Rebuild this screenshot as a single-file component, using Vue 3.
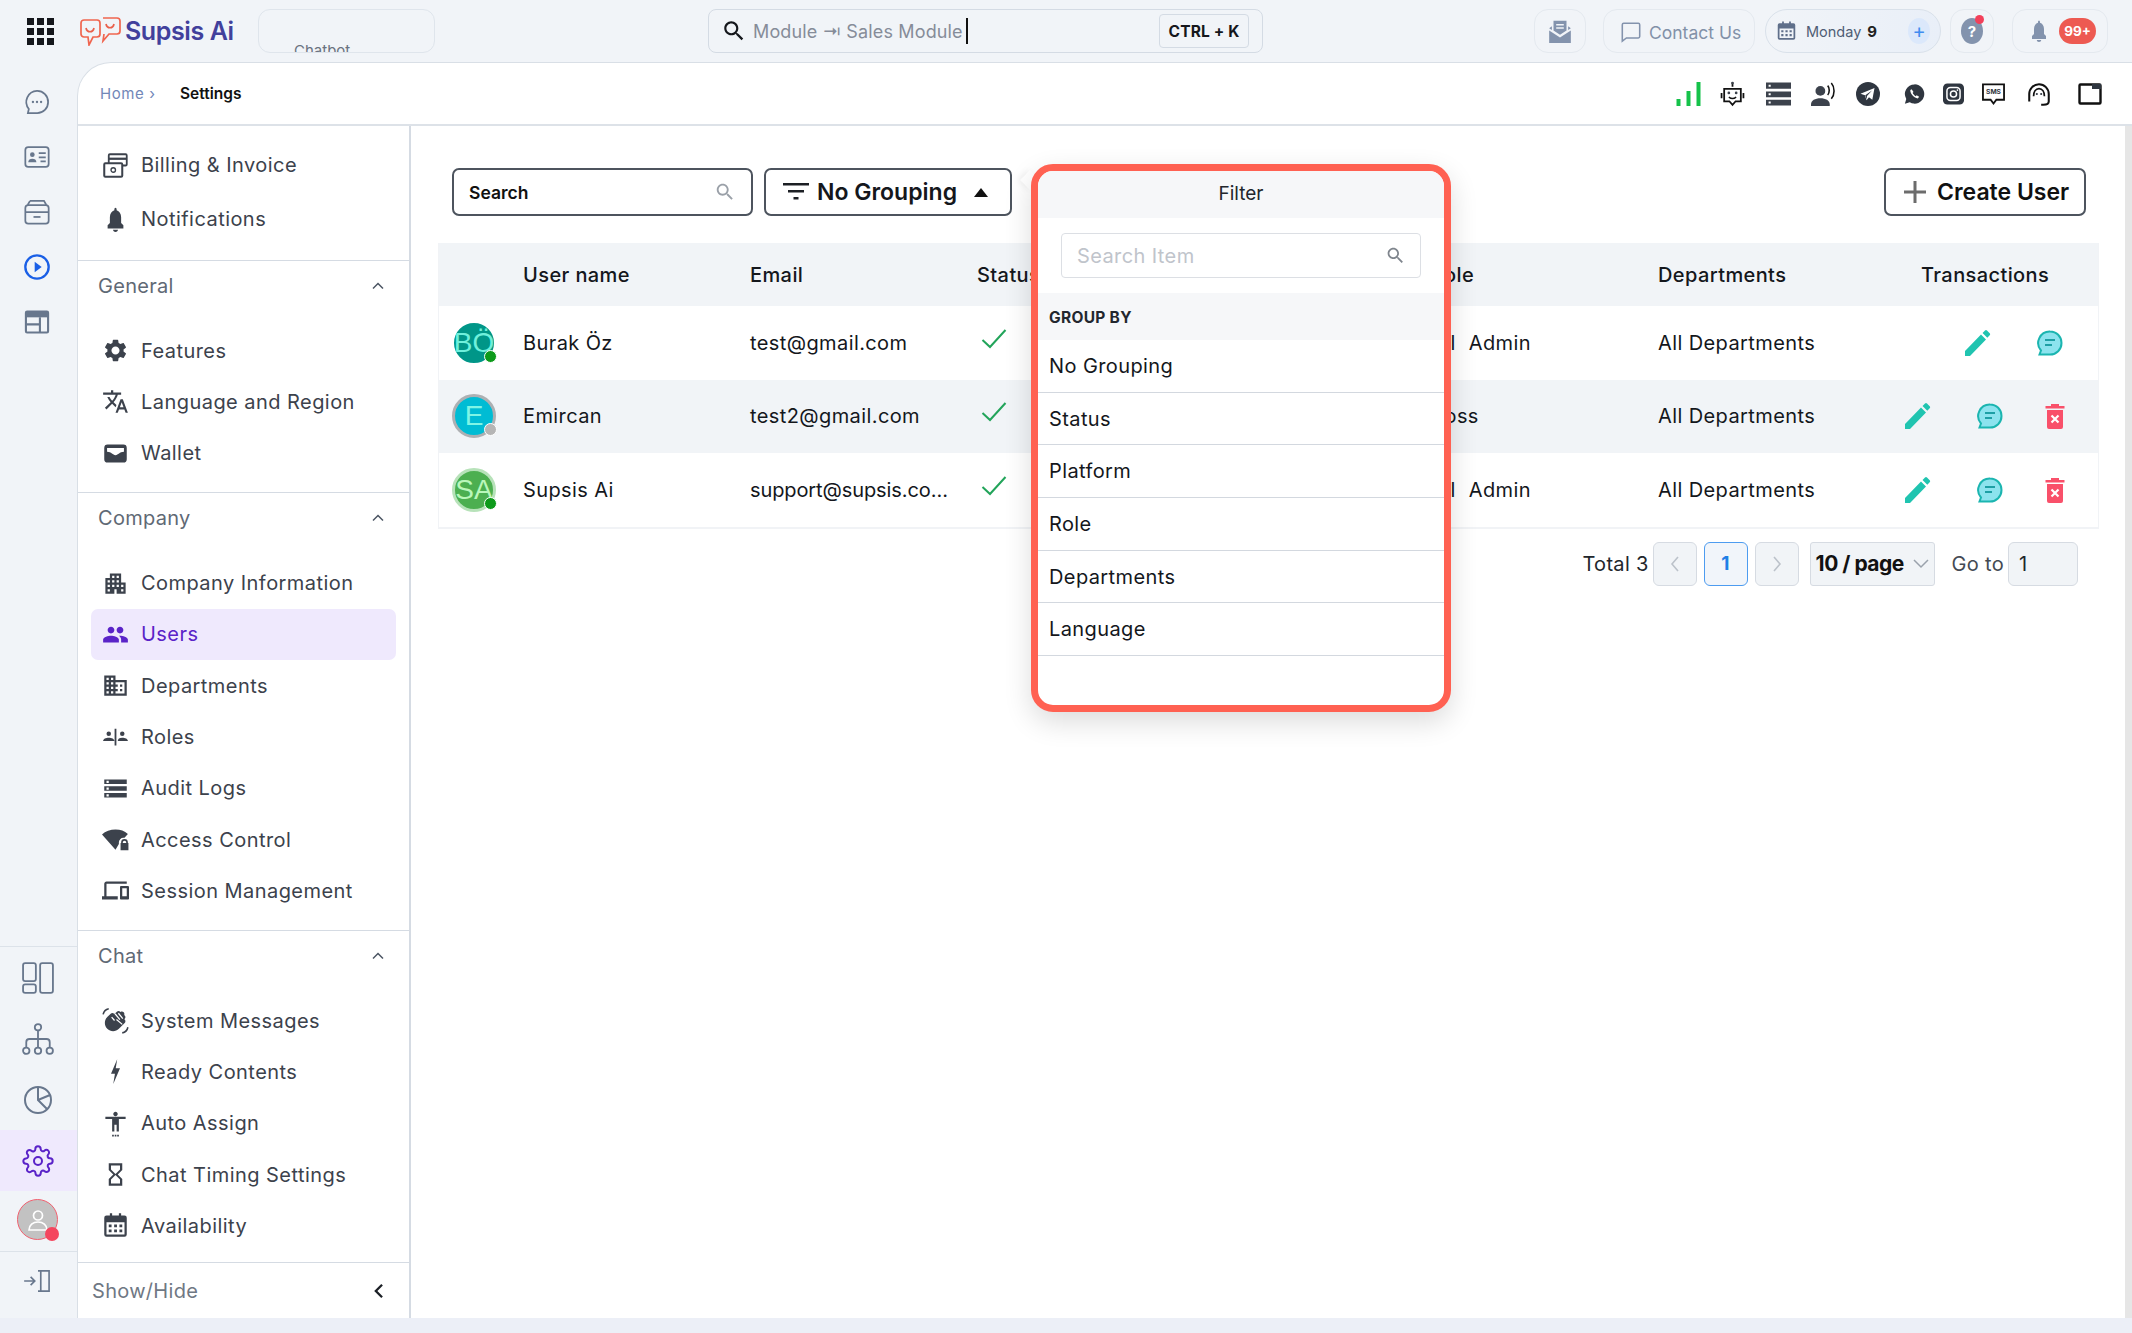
<script setup>
const icons = {
  billing: '<rect x="6" y="2" width="16" height="10" rx="1" fill="none" stroke="currentColor" stroke-width="1.6"/><path d="M6 5h16v2H6z"/><rect x="2" y="10" width="16" height="12" rx="1" fill="#fff" stroke="currentColor" stroke-width="1.8"/><circle cx="10" cy="16" r="2" fill="none" stroke="currentColor" stroke-width="1.2"/>',
  bell: '<path d="M12 23c1.3 0 2.2-.9 2.2-2h-4.400c0 1.100.9 2 2.200 2zm7-5v-1l-2-2v-5c0-3.100-1.600-5.600-4-6.300V3c0-.7-.4-1.500-1-1.500s-1 .8-1 1.500v.7C8.600 4.400 7 6.900 7 10v5l-2 2v3h14z"/>',
  gear: '<path d="M19.140 12.940c.04-.3.06-.61.06-.94 0-.32-.02-.64-.07-.94l2.030-1.580c.18-.14.23-.41.12-.61l-1.920-3.320c-.12-.22-.37-.29-.59-.22l-2.390.96c-.5-.38-1.030-.7-1.620-.94l-.36-2.540c-.04-.24-.24-.41-.48-.41h-3.840c-.24 0-.43.17-.47.41l-.36 2.540c-.59.24-1.130.57-1.620.94l-2.390-.96c-.22-.08-.47 0-.59.22L2.740 8.870c-.12.21-.08.47.12.61l2.030 1.580c-.05.3-.09.63-.09.94s.02.64.07.94l-2.030 1.580c-.18.14-.23.41-.12.61l1.920 3.320c.12.22.37.29.59.22l2.390-.96c.5.38 1.030.7 1.620.94l.36 2.540c.05.24.24.41.48.41h3.840c.24 0 .44-.17.47-.41l.36-2.540c.59-.24 1.130-.56 1.620-.94l2.390.96c.22.08.47 0 .59-.22l1.920-3.320c.12-.22.07-.47-.12-.61l-2.010-1.580zM12 15.600c-1.980 0-3.600-1.620-3.600-3.600s1.620-3.600 3.600-3.600 3.600 1.620 3.600 3.600-1.620 3.600-3.600 3.600z"/>',
  translate: '<path d="M12.870 15.070l-2.540-2.510.03-.03c1.740-1.940 2.980-4.170 3.710-6.530H17V4h-7V2H8v2H1v1.990h11.170C11.500 7.920 10.440 9.750 9 11.350 8.070 10.320 7.300 9.190 6.690 8h-2c.73 1.630 1.730 3.170 2.980 4.560l-5.090 5.020L4 19l5-5 3.110 3.110.76-2.040zM18.500 10h-2L12 22h2l1.120-3h4.750L21 22h2l-4.500-12zm-2.620 7l1.620-4.330L19.120 17h-3.240z"/>',
  wallet: '<path d="M5 4h14a3 3 0 0 1 3 3v10a3 3 0 0 1-3 3H5a3 3 0 0 1-3-3V7a3 3 0 0 1 3-3zm-.500 3v3.500h15V7zm0 3.500c4 0 5 3 7.500 3s3.500-3 7.500-3z" fill-rule="evenodd"/>',
  company: '<path d="M17 11V3H7v4H3v14h8v-4h2v4h8V11h-4zM7 19H5v-2h2v2zm0-4H5v-2h2v2zm0-4H5V9h2v2zm4 4H9v-2h2v2zm0-4H9V9h2v2zm0-4H9V5h2v2zm4 8h-2v-2h2v2zm0-4h-2V9h2v2zm0-4h-2V5h2v2zm4 12h-2v-2h2v2zm0-4h-2v-2h2v2z"/>',
  people: '<path d="M16 11c1.660 0 2.990-1.340 2.990-3S17.660 5 16 5c-1.660 0-3 1.340-3 3s1.340 3 3 3zm-8 0c1.660 0 2.990-1.340 2.990-3S9.660 5 8 5C6.340 5 5 6.340 5 8s1.340 3 3 3zm0 2c-2.330 0-7 1.170-7 3.500V19h14v-2.500c0-2.330-4.670-3.500-7-3.500zm8 0c-.29 0-.62.02-.97.05 1.160.84 1.970 1.970 1.970 3.450V19h6v-2.500c0-2.330-4.670-3.500-7-3.500z"/>',
  domain: '<path d="M12 7V3H2v18h20V7H12zM6 19H4v-2h2v2zm0-4H4v-2h2v2zm0-4H4V9h2v2zm0-4H4V5h2v2zm4 12H8v-2h2v2zm0-4H8v-2h2v2zm0-4H8V9h2v2zm0-4H8V5h2v2zm10 12h-8v-2h2v-2h-2v-2h2v-2h-2V9h8v10zm-2-8h-2v2h2v-2zm0 4h-2v2h2v-2z"/>',
  roles: '<circle cx="6" cy="9.500" r="2"/><path d="M1 16c0-2 2.500-3 5-3s5 1 5 3zM11.200 5h1.600v15h-1.600z"/><circle cx="18" cy="9.500" r="2"/><path d="M14 16c0-2 1.500-3 4-3s5 1 5 3z"/>',
  storage: '<path d="M2 20h20v-4H2v4zm2-3h2v2H4v-2zM2 4v4h20V4H2zm4 3H4V5h2v2zm-4 7h20v-4H2v4zm2-3h2v2H4v-2z"/>',
  access: '<path d="M0 7.500C3 4.500 7.500 3 12 3s8 1.300 11 4l-3 3.500h-1a4 4 0 0 0-4 4v1.500L12 21z"/><path d="M23.500 15v-.5a3 3 0 0 0-6 0v.5h-.5v6.500h7V15zm-1.500 0h-3v-.5a1.500 1.500 0 0 1 3 0z" transform="translate(-.5 0)"/>',
  devices: '<path d="M4 6h18V4H4c-1.100 0-2 .9-2 2v11H0v3h14v-3H4V6zm19 2h-6c-.55 0-1 .45-1 1v10c0 .55.45 1 1 1h6c.55 0 1-.45 1-1V9c0-.55-.45-1-1-1zm-1 9h-4v-7h4v7z"/>',
  wave: '<g transform="translate(12 12) scale(.86) translate(-12 -12)"><path d="M7.030 4.950L3.490 8.490c-3.320 3.320-3.320 8.700 0 12.020s8.700 3.320 12.020 0l6.010-6.010c.97-.97.97-2.560 0-3.540-.12-.12-.25-.23-.39-.32l.39-.39c.97-.97.97-2.560 0-3.540-.16-.16-.35-.3-.53-.41.38-.92.21-2.020-.54-2.770-.87-.87-2.220-.96-3.200-.28-.1-.15-.2-.29-.33-.42-.97-.97-2.560-.97-3.540 0l-2.510 2.510c-.09-.14-.2-.27-.32-.39-.97-.98-2.560-.98-3.530-.01z"/><path d="M8 8.500l3 3.500M11.500 5l5 6M15 4.500l4.500 5.500M13 11l6 5" stroke="#fff" stroke-width="1.300" fill="none"/></g><path d="M1 6.500C1.500 4 3.500 2 6 1.500M18 23c2.500-.5 4.500-2.500 5-5" stroke="currentColor" stroke-width="1.400" fill="none"/>',
  bolt: '<path d="M13.500 1 8 14h3.500L10 23l6-14h-3.800z"/>',
  person: '<path d="M12 1.500c1.100 0 2 .9 2 2s-.9 2-2 2-2-.9-2-2 .9-2 2-2zM21 8h-6v11h-2v-6h-2v6H9V8H3V6h18z"/><path d="M9 22h1.500v1.500H9zM11.300 22h1.500v1.500h-1.500zM13.500 22H15v1.500h-1.500z"/>',
  hourglass: '<path d="M6 2v6h.01L6 8.010 10 12l-4 4 .01.01H6V22h12v-5.990h-.01L18 16l-4-4 4-3.990-.01-.01H18V2H6zm10 14.500V20H8v-3.500l4-4 4 4zm-4-5l-4-4V4h8v3.500l-4 4z"/>',
  calendar: '<path d="M7 1h2v3H7zM15 1h2v3h-2z"/><path d="M4 3h16a2 2 0 0 1 2 2v15a2 2 0 0 1-2 2H4a2 2 0 0 1-2-2V5a2 2 0 0 1 2-2zm0 6v11h16V9z" fill-rule="evenodd"/><path d="M6 11h2.500v2.500H6zM10.800 11h2.500v2.500h-2.500zM15.500 11H18v2.500h-2.500zM6 15.500h2.500V18H6zM10.800 15.500h2.500V18h-2.500zM15.500 15.500H18V18h-2.500z"/>'
}
const SEARCH = 'M15.500 14h-.79l-.28-.27C15.410 12.590 16 11.110 16 9.500 16 5.910 13.090 3 9.500 3S3 5.910 3 9.500 5.910 16 9.500 16c1.610 0 3.090-.59 4.230-1.570l.27.28v.79l5 4.990L20.490 19l-4.990-5zm-6 0C7.010 14 5 11.990 5 9.500S7.010 5 9.500 5 14 7.010 14 9.500 11.990 14 9.500 14z'

const railTop = [
  { k: 'chat', html: '<path d="M12 2.500a9.300 9.300 0 0 1 9.500 9.500 9.300 9.300 0 0 1-9.500 9.500H4.200l.8-3.500A9.500 9.500 0 0 1 12 2.500z" fill="none" stroke="currentColor" stroke-width="1.500"/><circle cx="8.500" cy="12" r="1"/><circle cx="12" cy="12" r="1"/><circle cx="15.500" cy="12" r="1"/>' },
  { k: 'card', html: '<rect x="2" y="3.500" width="20" height="17" rx="2.500" fill="none" stroke="currentColor" stroke-width="1.500"/><circle cx="8" cy="10" r="2"/><path d="M4.500 16.500c0-2 1.500-3 3.500-3s3.500 1 3.500 3zM13.500 8h6v1.500h-6zM13.500 11.500h6V13h-6zM15 15h4.500v1.500H15z"/>' },
  { k: 'inbox', html: '<rect x="2" y="6" width="20" height="16" rx="2.500" fill="none" stroke="currentColor" stroke-width="1.500"/><path d="M2 12h20M6 2.500h12l2 3.500M6 2.500 4 6" fill="none" stroke="currentColor" stroke-width="1.500"/><path d="M9 15.500h6V17H9z"/>' },
  { k: 'play', blue: true, html: '<circle cx="12" cy="12" r="10" fill="none" stroke="currentColor" stroke-width="2"/><path d="M10 7.500 16 12l-6 4.500z"/>' },
  { k: 'layout', html: '<rect x="2.500" y="3" width="19" height="18" rx="1" fill="none" stroke="currentColor" stroke-width="1.800"/><path d="M2.500 3h19v5h-19z"/><path d="M3 14h11M14.500 8v13" fill="none" stroke="currentColor" stroke-width="1.800"/>' }
]

const topIcons = [
  { k: 'signal', w: 25, ml: 0, c: '#15c24a', html: '<path d="M0 17h4v7H0zM10 9h4v15h-4zM20 0h4v24h-4z"/>' },
  { k: 'robot', w: 25, ml: 19, c: '#3c424c', html: '<path d="M12 1v4M4 7h16v12h-5l-3 3.500L9 19H4zM1.500 11v5M22.500 11v5" fill="none" stroke="currentColor" stroke-width="1.700"/><circle cx="12" cy="1.500" r="1.300"/><circle cx="8.500" cy="11" r="1.300"/><circle cx="15.500" cy="11" r="1.300"/><path d="M8.500 15c2 1.500 5 1.500 7 0" fill="none" stroke="currentColor" stroke-width="1.400"/>' },
  { k: 'server', w: 25, ml: 21, c: '#3c424c', html: '<path d="M0 1h24v6H0zm2.500 2v2h2V3zM0 9.500h24v5.500H0zm2.500 1.700v2h2v-2zM0 17.500h24V23H0zm2.500 1.700v2h2v-2z" fill-rule="evenodd"/>' },
  { k: 'voice', w: 25, ml: 20, c: '#3c424c', html: '<circle cx="9" cy="9" r="4.700"/><path d="M0 22c0-4 4-6 9-6s9 2 9 6v1.500H0z"/><path d="M16 4c2 2 2 7 0 9M19.500 1.500c3.500 4 3.500 11 0 15" fill="none" stroke="currentColor" stroke-width="1.500"/>' },
  { k: 'telegram', w: 24, ml: 20, c: '#2f3640', html: '<circle cx="12" cy="12" r="12"/><path d="M18.500 6 4.500 11.800l4.500 1.500 1.500 5 2.500-3 3.300 2.400z" fill="#fff"/><path d="M9.300 13.200 16 8.500l-5 5.500-.4 3.500z"/>' },
  { k: 'whatsapp', w: 21, ml: 24, c: '#2f3640', html: '<path d="M12 1a11 11 0 0 0-9.400 16.600L1 23l5.600-1.500A11 11 0 1 0 12 1z"/><path d="M8.700 6.500 7.300 7.300c-.8 3 3.500 9 8.500 9.700l1.500-1.800-2.800-1.700-1.200 1c-1.500-.7-3-2.500-3.400-3.800l1-1.100z" fill="#fff"/>' },
  { k: 'instagram', w: 21, ml: 18, c: '#2f3640', html: '<rect x="0" y="0" width="24" height="24" rx="5"/><rect x="4.500" y="4.500" width="15" height="15" rx="4" fill="none" stroke="#fff" stroke-width="1.700"/><circle cx="12" cy="12" r="3.500" fill="none" stroke="#fff" stroke-width="1.700"/><circle cx="16.500" cy="7.500" r="1" fill="#fff"/>' },
  { k: 'sms', w: 23, ml: 18, c: '#2f3640', html: '<path d="M1 2h22v16h-8l-3 4-3-4H1z" fill="none" stroke="currentColor" stroke-width="1.900"/><text x="12" y="12.500" font-size="7" font-weight="700" text-anchor="middle" font-family="Inter, sans-serif">SMS</text>' },
  { k: 'headset', w: 26, ml: 21, c: '#2f3640', html: '<path d="M3 19v-7a9 9 0 0 1 18 0v7M21 19c0 2-2 3-5 3h-2" fill="none" stroke="currentColor" stroke-width="1.900"/><path d="M7 14c0-4 2-7 5-7s5 3 5 7" fill="none" stroke="currentColor" stroke-width="1.600"/><circle cx="10" cy="12" r="1"/><circle cx="14" cy="12" r="1"/>' },
  { k: 'window', w: 24, ml: 26, c: '#2f3640', html: '<rect x="1.500" y="2.500" width="21" height="19" rx="1" fill="none" stroke="currentColor" stroke-width="2.400"/><path d="M14 2h9v5h-9z"/>' }
]

const groups = [
  { title: 'General', items: [['gear', 'Features'], ['translate', 'Language and Region'], ['wallet', 'Wallet']] },
  { title: 'Company', items: [['company', 'Company Information'], ['people', 'Users', true], ['domain', 'Departments'], ['roles', 'Roles'], ['storage', 'Audit Logs'], ['access', 'Access Control'], ['devices', 'Session Management']] },
  { title: 'Chat', items: [['wave', 'System Messages'], ['bolt', 'Ready Contents'], ['person', 'Auto Assign'], ['hourglass', 'Chat Timing Settings'], ['calendar', 'Availability']] }
]

const users = [
  { init: 'BÖ', cls: 'teal', dot: 'on', name: 'Burak Öz', email: 'test@gmail.com', role: 'All Admin', del: false },
  { init: 'E', cls: 'cyan', dot: 'off', name: 'Emircan', email: 'test2@gmail.com', role: 'Boss', del: true },
  { init: 'SA', cls: 'green', dot: 'on', name: 'Supsis Ai', email: 'support@supsis.co…', role: 'All Admin', del: true, long: true }
]
const options = ['No Grouping', 'Status', 'Platform', 'Role', 'Departments', 'Language']
</script>

<template>
  <div class="app">
    <header class="top">
      <div class="grid9"><i v-for="n in 9" :key="n"></i></div>
      <svg class="logo" viewBox="0 0 43 30" fill="none" stroke="#f0654f" stroke-width="1.700">
        <path d="M5 4h13a3 3 0 0 1 3 3v11a3 3 0 0 1-3 3h-4l-4 8-1-8H5a3 3 0 0 1-3-3V7a3 3 0 0 1 3-3z" />
        <path d="M24 2h14a3 3 0 0 1 3 3v10a3 3 0 0 1-3 3h-8l-6 7 1-7" />
        <path d="M7 12c1 5 7 5 8 0M27 8c1 5 7 5 8 0" stroke="#e9604c" />
      </svg>
      <div class="brand">Supsis Ai</div>
      <div class="chatbot"><span>Chatbot</span></div>
      <div class="cmd">
        <svg class="cmd-ic" viewBox="0 0 24 24"><path :d="SEARCH" /></svg>
        <span class="cmd-t">Module ⇥ Sales Module</span><span class="caret"></span>
        <span class="kbd">CTRL + K</span>
      </div>
      <div class="tb mail">
        <svg viewBox="0 0 24 24" width="26" height="26" fill="#8393ad"><path d="M6 2.500h12v9l-6 4-6-4z M8.500 5.500v1.500h7V5.500z M8.500 8.500V10h7V8.500z" fill-rule="evenodd" /><path d="M2 9.500l2.500-1.800V11zM22 9.500l-2.500-1.800V11zM2 11.500l10 6.500 10-6.500V23H2z" /></svg>
      </div>
      <div class="tb contact">
        <svg viewBox="0 0 24 24" width="22" height="24" fill="none" stroke="#8393ad" stroke-width="1.700"><path d="M4 2.500h16a1.500 1.500 0 0 1 1.500 1.500v13a1.500 1.500 0 0 1-1.500 1.500H7L2.500 22V4A1.500 1.500 0 0 1 4 2.500z" /></svg>
        <span>Contact Us</span>
      </div>
      <div class="tb monday">
        <svg viewBox="0 0 24 24" width="21" height="24" fill="#5f6f8a" v-html="icons.calendar"></svg>
        <span class="mon">Monday</span><b>9</b>
        <span class="plus">+</span>
      </div>
      <div class="tb help">
        <span class="q">?</span><i class="reddot"></i>
      </div>
      <div class="tb bellbox">
        <svg viewBox="0 0 24 24" width="24" height="28" fill="#8393ad" v-html="icons.bell"></svg>
        <span class="badge">99+</span>
      </div>
    </header>

    <div class="body">
      <nav class="rail">
        <div class="rail-top">
          <div v-for="r in railTop" :key="r.k" class="rail-i" :class="{ blue: r.blue }">
            <svg viewBox="0 0 24 24" width="30" height="30" fill="currentColor" v-html="r.html"></svg>
          </div>
        </div>
        <div class="rail-bot">
          <div class="rb">
            <svg viewBox="0 0 30 30" width="32" height="32" fill="none" stroke="currentColor" stroke-width="1.700"><rect x="1" y="1" width="12" height="17" rx="2" /><rect x="1" y="21" width="12" height="8" rx="2" /><rect x="17" y="1" width="12" height="28" rx="2" /></svg>
          </div>
          <div class="rb">
            <svg viewBox="0 0 30 30" width="32" height="32" fill="none" stroke="currentColor" stroke-width="1.700"><circle cx="15" cy="4" r="3" /><circle cx="4" cy="26" r="3" /><circle cx="15" cy="26" r="3" /><circle cx="26" cy="26" r="3" /><path d="M15 7v16M4 23v-5c0-2 1-3 3-3h16c2 0 3 1 3 3v5" /></svg>
          </div>
          <div class="rb">
            <svg viewBox="0 0 30 30" width="30" height="30" fill="none" stroke="currentColor" stroke-width="2"><circle cx="15" cy="15" r="13" /><path d="M15 2v13l9 9M15 15l12-5" /></svg>
          </div>
          <div class="rb active">
            <svg viewBox="0 0 24 24" width="32" height="32" fill="none" stroke="currentColor" stroke-width="1.500"><circle cx="12" cy="12" r="3" /><path d="M19.400 15a1.650 1.650 0 0 0 .33 1.820l.06.06a2 2 0 0 1 0 2.830 2 2 0 0 1-2.830 0l-.06-.06a1.650 1.650 0 0 0-1.820-.33 1.650 1.650 0 0 0-1 1.510V21a2 2 0 0 1-2 2 2 2 0 0 1-2-2v-.09A1.650 1.650 0 0 0 9 19.400a1.650 1.650 0 0 0-1.820.33l-.06.06a2 2 0 0 1-2.830 0 2 2 0 0 1 0-2.830l.06-.06a1.650 1.650 0 0 0 .33-1.820 1.650 1.650 0 0 0-1.510-1H3a2 2 0 0 1-2-2 2 2 0 0 1 2-2h.09A1.650 1.650 0 0 0 4.600 9a1.650 1.650 0 0 0-.33-1.820l-.06-.06a2 2 0 0 1 0-2.830 2 2 0 0 1 2.830 0l.06.06a1.650 1.650 0 0 0 1.820.33H9a1.650 1.650 0 0 0 1-1.510V3a2 2 0 0 1 2-2 2 2 0 0 1 2 2v.09a1.650 1.650 0 0 0 1 1.510 1.650 1.650 0 0 0 1.820-.33l.06-.06a2 2 0 0 1 2.830 0 2 2 0 0 1 0 2.830l-.06.06a1.650 1.650 0 0 0-.33 1.820V9a1.650 1.650 0 0 0 1.510 1H21a2 2 0 0 1 2 2 2 2 0 0 1-2 2h-.09a1.650 1.650 0 0 0-1.510 1z" /></svg>
          </div>
          <div class="me">
            <svg viewBox="0 0 24 24" width="24" height="24" fill="none" stroke="#fff" stroke-width="1.700"><circle cx="12" cy="7.500" r="4.500" /><path d="M3 22c0-5 4-8 9-8s9 3 9 8z" /></svg>
            <i></i>
          </div>
          <div class="exit">
            <svg viewBox="0 0 30 26" width="30" height="24" fill="none" stroke="currentColor" stroke-width="1.800"><path d="M0 13h11M7 8.500l4.500 4.500L7 17.500M15 2h3v22h-3M18 2h9v22h-9z" /></svg>
          </div>
        </div>
      </nav>

      <div class="panel">
        <div class="crumb">
          <span class="home">Home ›</span><span class="here">Settings</span>
          <div class="tools">
            <svg v-for="t in topIcons" :key="t.k" viewBox="0 0 24 24" :width="t.w" :height="t.k === 'signal' ? 24 : 28" :fill="t.c" :style="{ marginLeft: t.ml + 'px' }" v-html="t.html"></svg>
          </div>
        </div>
        <div class="work">
          <aside class="side">
            <div class="first">
              <div class="it tall"><svg class="ic" viewBox="0 0 24 24" fill="currentColor" v-html="icons.billing"></svg>Billing &amp; Invoice</div>
              <div class="it tall"><svg class="ic" viewBox="0 0 24 24" fill="currentColor" v-html="icons.bell"></svg>Notifications</div>
            </div>
            <section v-for="g in groups" :key="g.title" class="grp">
              <div class="gh">{{ g.title }}
                <svg viewBox="0 0 12 8" width="12" height="8" fill="none" stroke="#4b5563" stroke-width="1.500"><path d="M1 6.500 6 1.500l5 5" /></svg>
              </div>
              <div v-for="i in g.items" :key="i[1]" class="it" :class="{ on: i[2] }">
                <svg class="ic" viewBox="0 0 24 24" fill="currentColor" v-html="icons[i[0]]"></svg>{{ i[1] }}
              </div>
            </section>
            <div class="showhide">Show/Hide
              <svg viewBox="0 0 12 18" width="11" height="16" fill="none" stroke="#1c2026" stroke-width="2.600"><path d="M10 2 3 9l7 7" /></svg>
            </div>
          </aside>

          <main class="main">
            <div class="bar">
              <div class="sbox"><b>Search</b>
                <svg viewBox="0 0 24 24" width="22" height="22" fill="#9aa0a8"><path :d="SEARCH" /></svg>
              </div>
              <div class="group-btn">
                <svg viewBox="0 0 26 20" width="26" height="20" fill="#1c1f24"><path d="M0 1h26v2.600H0zM5 8h16v2.600H5zM10.500 15h5v2.600h-5z" /></svg>
                <span>No Grouping</span>
                <svg viewBox="0 0 14 9" width="14" height="9" fill="#111"><path d="M7 0l7 9H0z" /></svg>
              </div>
              <div class="create">
                <svg viewBox="0 0 22 22" width="22" height="22" fill="#6c6c6c"><path d="M9.500 0h3v9.500H22v3h-9.500V22h-3v-9.500H0v-3h9.500z" /></svg>
                <span>Create User</span>
              </div>
            </div>

            <div class="table">
              <div class="row head">
                <div></div><div>User name</div><div>Email</div><div>Status</div><div>Role</div><div>Departments</div><div>Transactions</div>
              </div>
              <div v-for="u in users" :key="u.name" class="row">
                <div class="avc">
                  <div class="av" :class="u.cls"><span>{{ u.init }}</span></div>
                  <i class="dot" :class="u.dot"></i>
                </div>
                <div>{{ u.name }}</div>
                <div class="mail-c" :class="{ long: u.long }">{{ u.email }}</div>
                <div>
                  <svg class="chk" viewBox="0 0 26 20" width="26" height="20" fill="none" stroke="#22a45a" stroke-width="2"><path d="M1.500 11 9 18 24.500 1" /></svg>
                </div>
                <div class="role-c">{{ u.role }}</div>
                <div>All Departments</div>
                <div class="acts" :class="{ two: !u.del }">
                  <svg viewBox="0 0 26 26" width="26" height="26" fill="#20c4b0"><path d="M0 26v-5L16 4.500l5 5L5 26zM17.500 3 20 .5a1.500 1.500 0 0 1 2 0l2.700 2.700a1.500 1.500 0 0 1 0 2L22.300 7.800z" /></svg>
                  <svg class="a2" viewBox="0 0 26 26" width="26" height="26"><path d="M13 1.500c6.500 0 11.500 5 11.500 11.500S19.500 24.500 13 24.500H2.500l1.500-4A11.500 11.500 0 0 1 13 1.500z" fill="#8ce3ee" stroke="#1bb5b0" stroke-width="2" /><path d="M8 10h10M8 15h7" stroke="#1d9fa5" stroke-width="2" /></svg>
                  <svg v-if="u.del" class="a3" viewBox="0 0 20 26" width="20" height="26"><path d="M6 1h8v2h5.500v2.500H.5V3H6zM2 7h16v17a2 2 0 0 1-2 2H4a2 2 0 0 1-2-2z" fill="#f9506a" /><path d="M6.500 12.500l7 7m0-7-7 7" stroke="#fff" stroke-width="2.200" /></svg>
                </div>
              </div>
            </div>

            <div class="pager">
              <span class="total">Total 3</span>
              <span class="pg"><svg viewBox="0 0 10 16" width="10" height="16" fill="none" stroke="#bcc2ca" stroke-width="1.600"><path d="M8 1 2 8l6 7" /></svg></span>
              <span class="pg cur">1</span>
              <span class="pg"><svg viewBox="0 0 10 16" width="10" height="16" fill="none" stroke="#bcc2ca" stroke-width="1.600"><path d="M2 1l6 7-6 7" /></svg></span>
              <span class="size"><b>10 / page</b><svg viewBox="0 0 16 10" width="16" height="10" fill="none" stroke="#9aa2ac" stroke-width="1.500"><path d="M1 1l7 7 7-7" /></svg></span>
              <span class="goto">Go to</span>
              <span class="jump">1</span>
            </div>

            <i class="tip"></i>
            <div class="pop">
              <div class="pop-h">Filter</div>
              <div class="pop-s">
                <div class="pop-in"><span>Search Item</span>
                  <svg viewBox="0 0 24 24" width="21" height="21" fill="#7f858d"><path :d="SEARCH" /></svg>
                </div>
              </div>
              <div class="pop-g">GROUP BY</div>
              <div v-for="o in options" :key="o" class="pop-o">{{ o }}</div>
            </div>
            <div class="scroll"></div>
          </main>
        </div>
      </div>
    </div>
    <div class="foot"></div>
  </div>
</template>

<style>
html, body { margin: 0; background: #f1f4f8; }
</style>

<style scoped>
.app { width: 2132px; height: 1333px; overflow: hidden; display: flex; flex-direction: column; background: #f1f4f8; font-family: Inter, "Noto Sans", sans-serif; color: #111; position: relative; }
svg { display: block; flex: none; }
i { display: block; }

/* top bar */
.top { height: 62px; flex: none; display: flex; align-items: center; padding-left: 27px; box-sizing: border-box; }
.grid9 { width: 27px; height: 27px; display: grid; grid-template-columns: repeat(3, 7px); gap: 3px; }
.grid9 i { background: #15171c; }
.logo { width: 43px; height: 30px; margin-left: 25px; }
.brand { width: 108px; margin-left: 3px; font-size: 25px; font-weight: 600; color: #41409c; white-space: nowrap; letter-spacing: -.4px; }
.chatbot { width: 177px; height: 44px; margin-left: 25px; box-sizing: border-box; border: 1.500px solid #dfe5ec; border-radius: 12px; overflow: hidden; font-size: 15px; color: #6a7280; line-height: 20px; padding: 31px 0 0 35px; }
.cmd { width: 555px; height: 44px; margin-left: 273px; box-sizing: border-box; border: 1.500px solid #d4dbe4; border-radius: 8px; display: flex; align-items: center; padding-left: 12px; font-size: 18px; letter-spacing: .15px; color: #868c99; }
.cmd-ic { width: 26px; height: 26px; fill: #15171c; }
.cmd-t { margin-left: 6px; width: 213px; white-space: nowrap; }
.caret { width: 1.500px; height: 26px; background: #111; }
.kbd { margin-left: auto; margin-right: 13px; width: 90px; height: 34px; box-sizing: border-box; border: 1.500px solid #d4dbe4; border-radius: 4px; display: flex; align-items: center; justify-content: center; color: #15171c; font-size: 15.500px; font-weight: 700; }
.tb { height: 44px; box-sizing: border-box; border: 1.500px solid #e4e9ef; border-radius: 14px; display: flex; align-items: center; flex: none; }
.mail { width: 52px; margin-left: 271px; justify-content: center; }
.contact { width: 152px; margin-left: 17px; padding: 2px 0 0 16px; gap: 7px; font-size: 17.500px; color: #8291a8; }
.monday { width: 176px; margin-left: 10px; border-radius: 22px; padding-left: 10px; font-size: 14.500px; color: #4f5d75; background: linear-gradient(90deg, #f1f4f8, #e9eff8); border-color: #d9e1ea; }
.mon { margin-left: 9px; }
.monday b { margin-left: 6px; color: #222; font-size: 15px; }
.plus { margin-left: auto; margin-right: 10px; width: 22px; height: 26px; border-radius: 50%; background: #dbe8fb; color: #3f8cf0; display: flex; align-items: center; justify-content: center; font-size: 20px; line-height: 1; }
.help { width: 44px; margin-left: 9px; justify-content: center; position: relative; }
.q { width: 22px; height: 26px; border-radius: 50%; background: #8393ad; color: #fff; display: flex; align-items: center; justify-content: center; font-weight: 700; font-size: 15px; }
.reddot { position: absolute; right: 9px; top: 5px; width: 9px; height: 9px; border-radius: 50%; background: #f2405a; }
.bellbox { width: 96px; margin-left: 18px; padding-left: 14px; gap: 8px; }
.badge { width: 37px; height: 26px; border-radius: 13px; background: #ed5a52; color: #fff; font-size: 13.500px; font-weight: 700; display: flex; align-items: center; justify-content: center; }

.body { flex: 1; min-height: 0; display: flex; }

/* rail */
.rail { width: 77px; flex: none; display: flex; flex-direction: column; justify-content: space-between; color: #68778d; }
.rail-top { padding-top: 12px; }
.rail-i { height: 55px; display: flex; align-items: center; justify-content: center; padding-right: 3px; }
.rail-i svg { width: 28px; height: 28px; }
.rail-i.blue { color: #1a5fe6; }
.rail-bot { border-top: 1.500px solid #dce2e9; height: 372px; box-sizing: border-box; display: flex; flex-direction: column; align-items: center; }
.rb { width: 100%; height: 61px; box-sizing: border-box; padding-right: 2px; display: flex; align-items: center; justify-content: center; }
.rb.active { background: #efe9fd; color: #5a23c8; }
.me { margin: 8px 2px 0 0; width: 41px; height: 41px; box-sizing: border-box; border-radius: 50%; background: #c2c2c2; border: 1.500px solid #f2606f; display: flex; align-items: center; justify-content: center; position: relative; }
.me i { position: absolute; right: -2px; bottom: -2px; width: 14px; height: 14px; border-radius: 50%; background: #f4455e; }
.exit { width: 100%; box-sizing: border-box; margin-top: 11px; border-top: 1.500px solid #dce2e9; padding: 17px 2px 0 0; display: flex; justify-content: center; }

/* panel */
.panel { flex: 1; min-width: 0; background: #fff; border-top-left-radius: 34px; border-top: 1.500px solid #d9dfe6; border-left: 1.500px solid #d9dfe6; display: flex; flex-direction: column; box-sizing: border-box; }
.crumb { height: 63px; flex: none; box-sizing: border-box; border-bottom: 2px solid #dde2e8; display: flex; align-items: center; padding-left: 22px; padding-right: 30px; }
.home { font-size: 15px; letter-spacing: .6px; color: #7287b8; width: 80px; }
.here { font-size: 15.500px; font-weight: 600; color: #111; }
.tools { margin-left: auto; display: flex; align-items: center; }
.work { flex: 1; min-height: 0; display: flex; }

/* sidebar */
.side { width: 333px; flex: none; box-sizing: border-box; border-right: 2px solid #d5dbe3; display: flex; flex-direction: column; color: #3c424c; }
.first { padding: 12px 0 14px; border-bottom: 1.500px solid #d5dbe3; }
.grp { padding-bottom: 13.500px; border-bottom: 1.500px solid #d5dbe3; }
.grp:last-of-type { padding-bottom: 11px; }
.gh { height: 50px; padding: 0 25px 0 20px; margin-bottom: 14px; display: flex; align-items: center; justify-content: space-between; font-size: 20px; letter-spacing: .3px; color: #5f6975; }
.it { height: 51.300px; margin: 0 13px; padding-left: 11px; display: flex; align-items: center; gap: 12px; font-size: 20px; letter-spacing: .45px; border-radius: 7px; white-space: nowrap; }
.it.tall { height: 54px; }
.it.on { background: #efe9fd; color: #5a23c8; }
.ic { width: 27px; height: 27px; }
.showhide { flex: 1; display: flex; align-items: center; justify-content: space-between; padding: 0 25px 0 14px; font-size: 20px; letter-spacing: .3px; color: #6f7884; }

/* main */
.main { flex: 1; min-width: 0; position: relative; }
.bar { display: flex; align-items: center; margin: 42px 46px 0 41px; gap: 11px; }
.sbox, .group-btn, .create { height: 48px; box-sizing: border-box; border: 2px solid #4d545e; border-radius: 7px; display: flex; align-items: center; }
.sbox { width: 301px; padding: 0 15px; justify-content: space-between; font-size: 17.500px; }
.sbox b { font-weight: 600; }
.group-btn { width: 248px; padding-left: 17px; font-size: 23px; font-weight: 600; color: #15171c; white-space: nowrap; }
.group-btn span { margin-left: 8px; }
.group-btn svg:last-child { margin-left: 17px; }
.create { width: 202px; margin-left: auto; padding-left: 18px; gap: 11px; font-size: 23px; font-weight: 600; white-space: nowrap; }

.table { margin: 27px 0 0 27px; width: 1661px; border-bottom: 2px solid #f1f3f6; border-left: 1px solid #f1f3f6; border-right: 1px solid #f1f3f6; box-sizing: border-box; }
.row { display: grid; grid-template-columns: 84px 227px 227px 454px 227px 263px 178px; height: 73.500px; align-items: center; font-size: 20px; letter-spacing: .4px; color: #14171c; }
.row:nth-child(3) { background: #f1f4f7; }
.row.head { height: 63px; background: #f1f4f7; font-weight: 500; }
.mail-c { white-space: nowrap; }
.mail-c.long { letter-spacing: -.1px; }
.role-c { word-spacing: 7px; }
.chk { margin: -8px 0 0 4px; }
.avc { position: relative; width: 44px; height: 44px; margin-left: 13px; }
.av { width: 44px; height: 44px; box-sizing: border-box; border-radius: 50%; overflow: hidden; display: flex; align-items: center; justify-content: center; font-size: 28px; letter-spacing: 0; font-family: "Liberation Sans", sans-serif; white-space: nowrap; }
.av.teal { background: #009688; color: #6ff0dc; border: 2px solid #fff; }
.av.cyan { background: #00bcd4; color: #7ff5e6; border: 3px solid #adb0b3; }
.av.green { background: #4caf50; color: #baf7ba; border: 3px solid #b7e2b9; }
.dot { position: absolute; right: -1px; bottom: 2px; width: 11px; height: 11px; border-radius: 50%; border: 1px solid #fff; }
.dot.on { background: #0d9a1a; }
.dot.off { background: #b5b5b5; }
.acts { display: flex; justify-content: flex-end; align-items: center; padding-right: 34px; }
.acts.two { padding-right: 36px; }
.a2 { margin-left: 46px; }
.a3 { margin-left: 42.500px; }

.pager { margin: 13px 0 0 27px; width: 1640px; display: flex; justify-content: flex-end; align-items: center; font-size: 20px; letter-spacing: .3px; color: #22262c; }
.pg, .size, .jump { height: 44px; box-sizing: border-box; background: #f1f4f7; border: 1.500px solid #d6dbe2; border-radius: 6px; display: flex; align-items: center; }
.pg { width: 44px; justify-content: center; margin-left: 7px; }
.total { margin-right: -3px; }
.cur { border-color: #4d9cf0; color: #1f7fe6; font-weight: 700; background: #f1f5fa; font-size: 19px; }
.size { width: 125px; margin-left: 11px; padding: 0 5px; justify-content: space-between; border-radius: 3px; color: #111; font-size: 21px; white-space: nowrap; }
.size b { letter-spacing: -.5px; font-weight: 700; }
.goto { margin-left: 17px; color: #444b54; }
.jump { width: 70px; margin-left: 4px; padding-left: 10px; }

/* popover */
.tip { position: absolute; left: 612px; top: 47px; width: 14px; height: 14px; background: #fff; transform: rotate(45deg); box-shadow: -2px 2px 6px rgba(0,0,0,.06); }
.pop { position: absolute; left: 620px; top: 38px; width: 420px; height: 548px; box-sizing: border-box; border: 7px solid #ff6152; border-radius: 22px; background: #fff; overflow: hidden; box-shadow: 0 10px 28px rgba(0,0,0,.14); }
.pop-h { height: 47px; padding-bottom: 2px; box-sizing: border-box; background: #f6f7f9; display: flex; align-items: center; justify-content: center; font-size: 19px; color: #22262c; }
.pop-s { height: 75px; box-sizing: border-box; padding: 15px 23px 0; }
.pop-in { height: 45px; box-sizing: border-box; border: 1.500px solid #dcdfe4; border-radius: 4px; display: flex; align-items: center; justify-content: space-between; padding: 0 14px 0 15px; color: #c0c4cb; font-size: 20px; letter-spacing: .4px; }
.pop-g { height: 47px; padding-top: 1px; box-sizing: border-box; background: #f6f7f9; display: flex; align-items: center; padding-left: 11px; font-size: 15.500px; letter-spacing: .3px; font-weight: 700; color: #23272e; }
.pop-o { height: 52.700px; box-sizing: border-box; border-bottom: 1.500px solid #d3d8df; display: flex; align-items: center; padding-left: 11px; font-size: 20px; letter-spacing: .4px; color: #14171c; }
.scroll { position: absolute; right: 0; top: 0; bottom: 0; width: 7px; background: #e6e6e6; }
.foot { height: 15px; flex: none; background: #eceff7; }
</style>
